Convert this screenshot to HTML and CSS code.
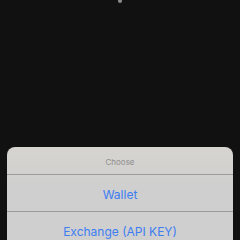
FILE: index.html
```html
<!DOCTYPE html>
<html>
  <head>
    <title>Choose</title>
    <meta charset="UTF-8" />
    <link rel="stylesheet" href="styles.css">
  </head>
  <body>
    <div class="screen">
      <div class="notch-dot"></div>
      <div class="sheet">
        <div class="sheet-title">Choose</div>
        <div class="sheet-option">Wallet</div>
        <div class="sheet-option">Exchange (API KEY)</div>
      </div>
    </div>
  </body>
</html>
```

FILE: styles.css
```css
body {
  margin: 0;
  background: #111111;
  font-family: Inter, "Liberation Sans", sans-serif;
}

.screen {
  position: relative;
  height: 240px;
  overflow: hidden;
  padding: 147px 7px 0 7px;
  box-sizing: border-box;
}

.notch-dot {
  position: absolute;
  left: 118px;
  top: -2px;
  width: 4px;
  height: 5px;
  border-radius: 2px;
  background: #8a8a8a;
}

.sheet {
  background: linear-gradient(180deg, #d6d4cf 0%, #cfcfcf 40%, #cfcfcf 100%);
  border-radius: 8px;
  overflow: hidden;
}

.sheet-title {
  height: 28px;
  padding-top: 2px;
  display: flex;
  align-items: center;
  justify-content: center;
  font-size: 8px;
  color: #8e8e8e;
  border-bottom: 1px solid #9c9c9c;
  box-sizing: border-box;
}

.sheet-option {
  height: 37px;
  padding-top: 3px;
  display: flex;
  align-items: center;
  justify-content: center;
  font-size: 12px;
  color: #3d7df2;
  border-bottom: 1px solid #9c9c9c;
  box-sizing: border-box;
}
```
